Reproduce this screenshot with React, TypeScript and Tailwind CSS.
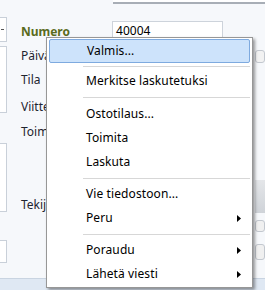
import React from 'react';

type Entry = { label: string; sub?: boolean; active?: boolean } | 'sep';

const entries: Entry[] = [
  { label: 'Valmis...', active: true },
  'sep',
  { label: 'Merkitse laskutetuksi' },
  'sep',
  { label: 'Ostotilaus...' },
  { label: 'Toimita' },
  { label: 'Laskuta' },
  'sep',
  { label: 'Vie tiedostoon...' },
  { label: 'Peru', sub: true },
  'sep',
  { label: 'Poraudu', sub: true },
  { label: 'Lähetä viesti', sub: true },
];

const sepHeights = ['h-[6px]', 'h-[9px]', 'h-[8px]', 'h-[8px]'];

function ContextMenu() {
  let sepIndex = 0;
  return (
    <div className="absolute left-[46px] top-[37px] w-[207px] h-[251px] bg-white border border-[#979797] px-[2px] py-[1px] shadow-[2px_2px_3px_rgba(0,0,0,0.4)]">
      {entries.map((e, i) => {
        if (e === 'sep') {
          const h = sepHeights[sepIndex++];
          return (
            <div key={i} className={`${h} flex items-center pl-[34px]`}>
              <div className="h-px w-full bg-[#d7d7d7]" />
            </div>
          );
        }
        return (
          <div
            key={i}
            className={`h-[24px] flex items-center justify-between pl-[37px] pr-[9px] text-[12px] tracking-[0.1px] text-black ${
              e.active ? 'bg-[#cde3fb] border border-[#7eaadf] rounded-[2px] pl-[36px] pr-[8px]' : ''
            }`}
          >
            <span>{e.label}</span>
            {e.sub && (
              <svg width="4" height="7" viewBox="0 0 4 7">
                <path d="M0 0 L4 3.5 L0 7 Z" fill="#000" />
              </svg>
            )}
          </div>
        );
      })}
    </div>
  );
}

export default function App() {
  return (
    <div className="relative w-[265px] h-[290px] overflow-hidden bg-[#f6f8fb] font-['Noto_Sans',sans-serif] text-[12px] text-[#1e2530]">
      {/* top field edge */}
      <div className="h-[4px] ml-[113px] bg-white border-b-2 border-[#a8aeb6]" />

      <div className="flex">
        {/* left column of fields */}
        <div className="w-[7px] flex flex-col">
          <div className="mt-[13px] h-[25px] bg-white border border-l-0 border-[#c9d0d9] flex items-center">
            <div className="w-[3px] h-px bg-[#555] ml-[1px]" />
          </div>
          <div className="mt-[4px] h-[67px] bg-white border border-l-0 border-[#c9d0d9]" />
          <div className="mt-[30px] h-[69px] bg-white border border-l-0 border-[#c9d0d9]" />
          <div className="mt-[28px] h-[23px] bg-white border border-l-0 border-[#c9d0d9]" />
        </div>

        {/* labels */}
        <div className="ml-[14px] w-[92px] flex flex-col">
          <div className="mt-[16px] h-[24px] leading-[24px] font-bold text-[#5a6b1d]">Numero</div>
          <div className="h-[24px] leading-[24px]">Päivämäärä</div>
          <div className="h-[24px] leading-[24px]">Tila</div>
          <div className="mt-[3px] h-[24px] leading-[24px]">Viitteet</div>
          <div className="mt-[1px] h-[24px] leading-[24px]">Toimitus</div>
          <div className="mt-[49px] h-[24px] leading-[24px]">Tekijä</div>
        </div>

        {/* inputs */}
        <div className="w-[112px] flex flex-col">
          <div className="mt-[17px] h-[20px] bg-white border border-[#cdd3db] pl-[3px] leading-[18px] text-black">40004</div>
        </div>

        {/* right edge controls */}
        <div className="ml-[32px] w-[10px] flex flex-col">
          <div className="mt-[46px] h-[13px] rounded-[3px] border border-[#c3c8cf] bg-[#f2f2f2]" />
          <div className="mt-[117px] h-[33px] bg-gradient-to-b from-[#e4e6e9] to-[#cfd3d8]" />
          <div className="mt-[7px] h-[12px] rounded-[3px] border border-[#c3c8cf] bg-[#f0f0f0]" />
          <div className="mt-[12px] h-[16px] rounded-[3px] border border-[#c3c8cf] bg-[#f0f0f0]" />
        </div>
      </div>

      {/* bottom strip */}
      <div className="absolute left-0 right-0 top-[278px] h-[12px] bg-[#dfe8f3] border-t border-[#c9d4e1]" />

      <ContextMenu />
    </div>
  );
}
